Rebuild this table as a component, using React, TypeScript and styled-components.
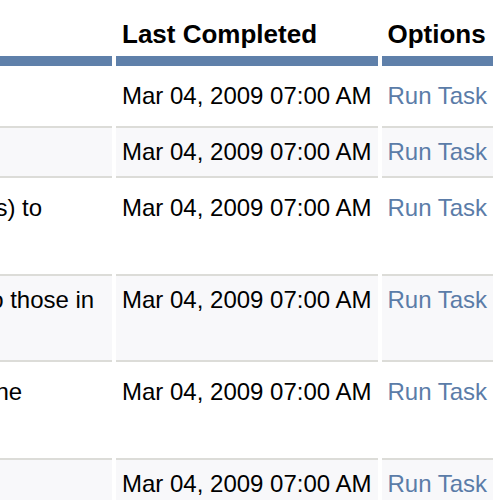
import React from "react";
import styled, { createGlobalStyle } from "styled-components";

const GlobalStyle = createGlobalStyle`
  html, body {
    margin: 0;
    padding: 0;
    background: #ffffff;
  }
  body {
    font-family: "Liberation Sans", Arial, sans-serif;
    color: #000000;
  }
`;

const Viewport = styled.div`
  width: 500px;
  height: 500px;
  overflow: hidden;
`;

const TaskTable = styled.table`
  margin-left: -240px;
  border-collapse: separate;
  border-spacing: 4px;
  font-family: "Liberation Sans", Arial, sans-serif;
  font-size: 24px;
`;

const HeadCell = styled.th<{ $width?: number }>`
  box-sizing: border-box;
  ${(p) => (p.$width ? `width: ${p.$width}px;` : "")}
  text-align: left;
  font-size: 26px;
  font-weight: bold;
  line-height: 36px;
  padding: 12px 6px 4px;
  border-bottom: 10px solid #5f80aa;
  white-space: nowrap;
`;

const Row = styled.tr<{ $striped: boolean }>`
  background: ${(p) => (p.$striped ? "#f8f8fa" : "transparent")};
  & > td {
    border-top: 2px solid ${(p) => (p.$striped ? "#dcdcd8" : "transparent")};
    border-bottom: 2px solid ${(p) => (p.$striped ? "#dcdcd8" : "transparent")};
  }
`;

const Cell = styled.td<{ $nowrap?: boolean }>`
  vertical-align: top;
  line-height: 36px;
  padding: 6px 6px;
  white-space: ${(p) => (p.$nowrap ? "nowrap" : "normal")};
`;

const RunLink = styled.a`
  color: #5b7ca8;
  text-decoration: none;
  cursor: pointer;
`;

const tasks = [
  "Send queued emails",
  "Purge old sessions",
  "Import remote group(s) to shared groups",
  "Update user details to those in the directory",
  "Reset the cache engine statistics",
  "Backup database",
];

export default function App() {
  return (
    <>
      <GlobalStyle />
      <Viewport>
        <TaskTable>
          <thead>
            <tr>
              <HeadCell $width={348}>Description</HeadCell>
              <HeadCell>Last Completed</HeadCell>
              <HeadCell>Options</HeadCell>
            </tr>
          </thead>
          <tbody>
            {tasks.map((t, i) => (
              <Row key={t} $striped={i % 2 === 1}>
                <Cell>{t}</Cell>
                <Cell $nowrap>Mar 04, 2009 07:00 AM</Cell>
                <Cell $nowrap>
                  <RunLink href="#">Run Task</RunLink>
                </Cell>
              </Row>
            ))}
          </tbody>
        </TaskTable>
      </Viewport>
    </>
  );
}
